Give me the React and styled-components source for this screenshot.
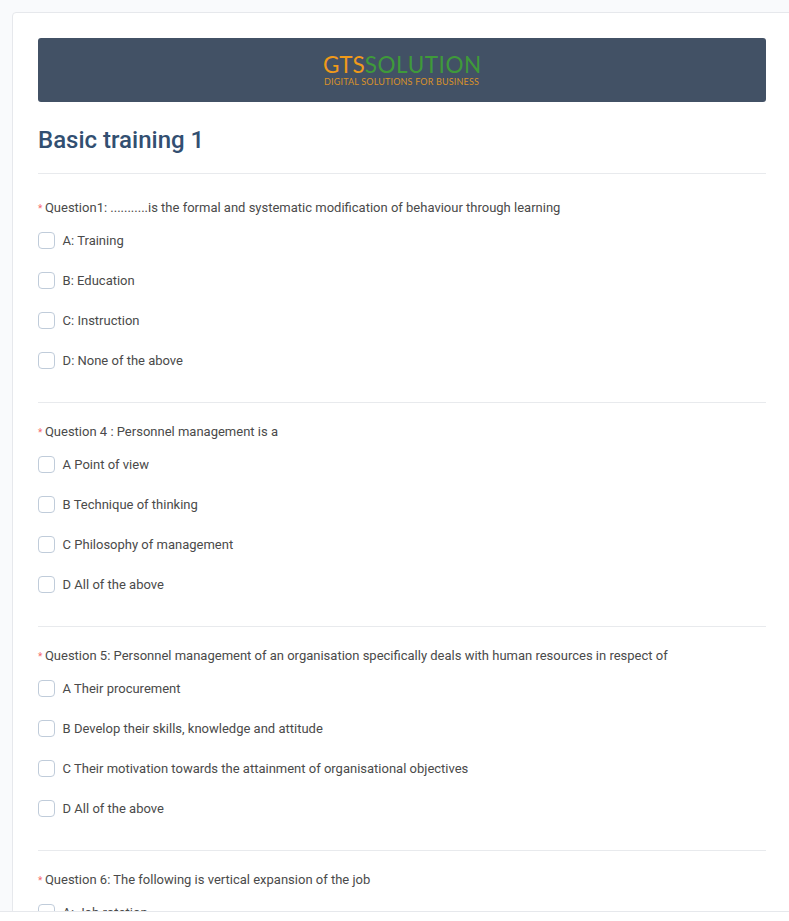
import React from "react";
import styled, { createGlobalStyle } from "styled-components";

const Global = createGlobalStyle`
  html, body { margin: 0; padding: 0; height: 100%; overflow: hidden; background: #f9fafc; }
  #root { height: 921px; overflow: hidden; }
  * { box-sizing: border-box; }
`;

const Page = styled.div`
  position: relative;
  height: 921px;
  overflow: hidden;
  padding: 12px 0 0 12px;
  font-family: Roboto, "Liberation Sans", sans-serif;
  color: #4a4a4a;
`;

const Card = styled.main`
  width: 800px;
  min-height: 1200px;
  background: #fff;
  border: 1px solid #e6e8ec;
  border-radius: 4px 0 0 0;
  padding: 25px 0 0 25px;
`;

const Inner = styled.div`
  width: 728px;
`;

const Banner = styled.header`
  height: 64px;
  background: #425165;
  border-radius: 3px;
  display: flex;
  justify-content: center;
  align-items: center;
`;

const Logo = styled.div`
  width: 158px;
  font-family: Lato, "Liberation Sans", sans-serif;
  display: flex;
  flex-direction: column;
  align-items: flex-start;
`;

const LogoMark = styled.div`
  font-size: 22.5px;
  line-height: 21px;
  font-weight: 400;
  letter-spacing: 0.55px;
  color: #3f9a3a;
  white-space: nowrap;
`;

const LogoAccent = styled.span`
  color: #f09a1a;
  letter-spacing: 0;
`;

const LogoTag = styled.div`
  margin-top: 1px;
  padding-left: 1px;
  font-size: 9px;
  line-height: 11px;
  color: #d9922a;
  white-space: nowrap;
  letter-spacing: 0.17px;
`;

const Title = styled.h1`
  margin: 0;
  height: 72px;
  padding-top: 22px;
  border-bottom: 1px solid #e8eaed;
  font-size: 24px;
  line-height: 32px;
  font-weight: 500;
  color: #324f71;
`;

const Section = styled.section`
  padding: ${(p) => (p.$first ? "25px" : "20px")} 0 33px;
  border-bottom: 1px solid #e8eaed;
`;

const Prompt = styled.div`
  font-size: 13px;
  line-height: 18px;
  margin-bottom: 14px;
  white-space: nowrap;
`;

const Star = styled.span`
  color: #f56c6c;
  font-size: 10px;
  margin-right: 2.6px;
`;

const Option = styled.label`
  display: flex;
  align-items: center;
  height: 17px;
  margin-bottom: 23px;
  font-size: 13px;
  white-space: nowrap;
  &:last-child { margin-bottom: 0; }
`;

const Box = styled.span`
  width: 17px;
  height: 17px;
  border: 1px solid #c0ccda;
  border-radius: 4px;
  background: #fff;
  margin-right: 7.6px;
  flex: none;
`;

const FooterStrip = styled.div`
  position: absolute;
  left: 0;
  right: 0;
  bottom: 0;
  height: 10px;
  background: #fff;
  border-top: 1px solid #e6e8ec;
`;

const questions = [
  { q: "Question1: ...........is the formal and systematic modification of behaviour through learning", o: ["A: Training", "B: Education", "C: Instruction", "D: None of the above"] },
  { q: "Question 4 : Personnel management is a", o: ["A Point of view", "B Technique of thinking", "C Philosophy of management", "D All of the above"] },
  { q: "Question 5: Personnel management of an organisation specifically deals with human resources in respect of", o: ["A Their procurement", "B Develop their skills, knowledge and attitude", "C Their motivation towards the attainment of organisational objectives", "D All of the above"] },
  { q: "Question 6: The following is vertical expansion of the job", o: ["A: Job rotation"] },
];

export default function App() {
  return (
    <Page>
      <Global />
      <Card>
        <Inner>
          <Banner>
            <Logo>
              <LogoMark><LogoAccent>GTS</LogoAccent>SOLUTION</LogoMark>
              <LogoTag>DIGITAL SOLUTIONS FOR BUSINESS</LogoTag>
            </Logo>
          </Banner>
          <Title>Basic training 1</Title>
          {questions.map((s, i) => (
            <Section key={s.q} $first={i === 0}>
              <Prompt><Star>*</Star>{s.q}</Prompt>
              {s.o.map((t) => (
                <Option key={t}><Box />{t}</Option>
              ))}
            </Section>
          ))}
        </Inner>
      </Card>
      <FooterStrip />
    </Page>
  );
}
